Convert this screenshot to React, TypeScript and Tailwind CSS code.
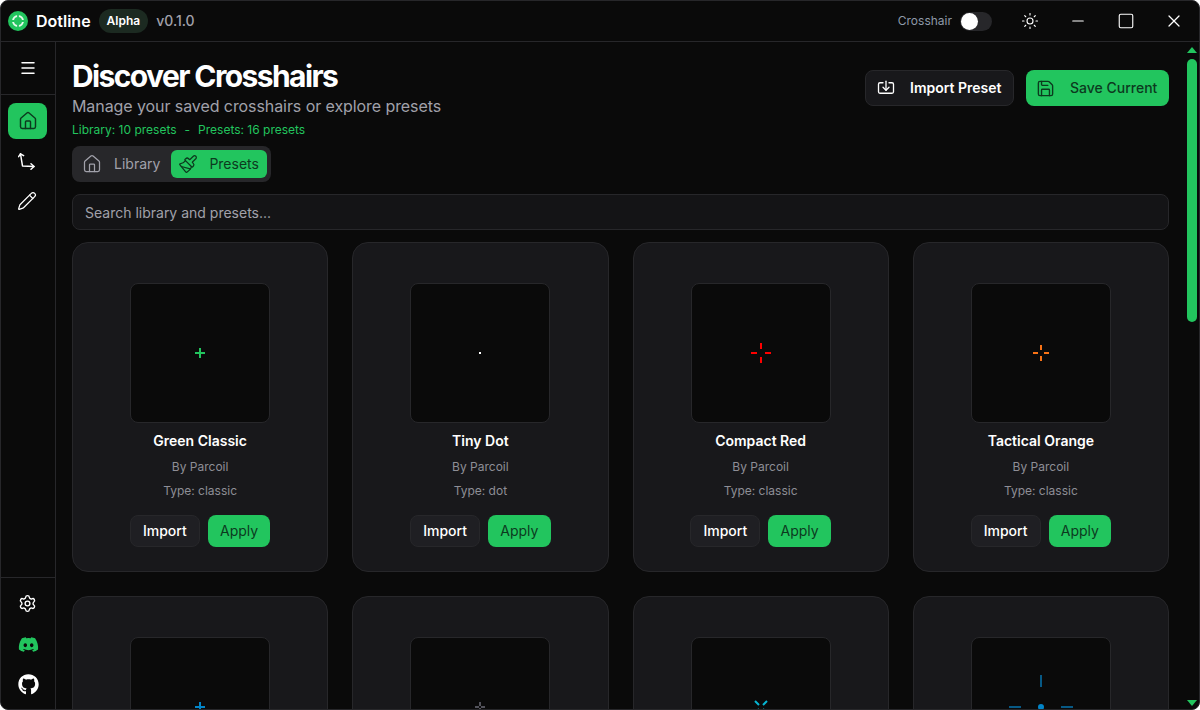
import { House, Import, Menu, Minus, Paintbrush, Pencil, Save, Settings, Square, Sun, X } from 'lucide-react'
import { FaDiscord, FaGithub } from 'react-icons/fa'

type Preset = { name: string; type: string; mark: React.ReactNode }

const Arms = ({ color, gap, len, w }: { color: string; gap: number; len: number; w: number }) => {
    const c = 16
    return (
        <svg width="32" height="32" viewBox="0 0 32 32" shapeRendering="crispEdges">
            <rect x={c - w / 2} y={c - gap - len} width={w} height={len} fill={color} />
            <rect x={c - w / 2} y={c + gap} width={w} height={len} fill={color} />
            <rect x={c - gap - len} y={c - w / 2} width={len} height={w} fill={color} />
            <rect x={c + gap} y={c - w / 2} width={len} height={w} fill={color} />
        </svg>
    )
}

const presets: Preset[] = [
    { name: 'Green Classic', type: 'classic', mark: <Arms color="#22c55e" gap={0} len={5} w={2} /> },
    { name: 'Tiny Dot', type: 'dot', mark: <div className="size-[2px] bg-white" /> },
    { name: 'Compact Red', type: 'classic', mark: <Arms color="#ff0000" gap={4} len={6} w={2} /> },
    { name: 'Tactical Orange', type: 'classic', mark: <Arms color="#f97316" gap={3} len={5} w={2} /> },
    { name: 'Blue Cross', type: 'classic', mark: <Arms color="#0284c7" gap={0} len={5} w={2} /> },
    { name: 'Gray Cross', type: 'classic', mark: <Arms color="#52525b" gap={1} len={4} w={2} /> },
    {
        name: 'Cyan X',
        type: 'classic',
        mark: (
            <svg width="32" height="32" viewBox="0 0 32 32" stroke="#06b6d4" strokeWidth="2">
                <path d="M10 10l4 4M22 10l-4 4M10 22l4-4M22 22l-4-4" />
            </svg>
        ),
    },
    {
        name: 'Blue Dot',
        type: 'classic',
        mark: (
            <div className="relative size-[96px] shrink-0">
                <div className="absolute left-[47px] top-[16px] h-3 w-0.5 bg-[#075985]" />
                <div className="absolute left-[16px] top-[47px] h-0.5 w-3 bg-[#075985]" />
                <div className="absolute right-[16px] top-[47px] h-0.5 w-3 bg-[#075985]" />
                <div className="absolute left-[45px] top-[45px] size-1.5 rounded-full bg-[#0284c7]" />
            </div>
        ),
    },
]

const Logo = () => (
    <svg width="20" height="20" viewBox="0 0 20 20" fill="none">
        <circle cx="10" cy="10" r="10" fill="#22c55e" />
        <circle cx="10" cy="10" r="5" stroke="#e8fbef" strokeWidth="2" />
        <path d="M10 3.5v3.2M10 13.3v3.2M3.5 10h3.2M13.3 10h3.2" stroke="#22c55e" strokeWidth="1.8" />
    </svg>
)

const AxisIcon = () => (
    <svg width="17" height="17" viewBox="0 0 17 17" fill="none" stroke="#fff" strokeWidth="1.5" strokeLinecap="round" strokeLinejoin="round">
        <path d="M2.5 0.8l2 12.2 11.5 .5" />
        <path d="M0.6 3.6L2.5 0.8l3.1 1.8" />
        <path d="M13 10.8l3 2.7-3 2.7" />
    </svg>
)

const TitleBar = () => (
    <header className="flex h-[41px] shrink-0 items-center border-b border-[#27272a] pl-[7px]">
        <Logo />
        <span className="ml-2 text-base font-semibold text-white">Dotline</span>
        <span className="ml-2 flex h-6 items-center rounded-full bg-[#1c2a21] px-2 text-xs font-semibold text-white">
            Alpha
        </span>
        <span className="ml-2 text-sm font-medium text-[#a1a1aa]">v0.1.0</span>
        <div className="ml-auto flex items-center">
            <span className="text-xs text-[#8e99a8]">Crosshair</span>
            <div className="ml-2 flex h-[19px] w-8 items-center rounded-full bg-[#27272a] pl-px">
                <div className="size-[17px] rounded-full bg-white" />
            </div>
            <Sun size={18} className="ml-[29px] text-white" strokeWidth={1.5} />
            <Minus size={18} className="ml-[30px] text-white" strokeWidth={1.5} />
            <Square size={18} className="ml-[30px] text-white" strokeWidth={1.5} />
            <X size={20} className="ml-[29px] mr-[15px] text-white" strokeWidth={1.5} />
        </div>
    </header>
)

const Sidebar = () => (
    <aside className="flex w-[55px] shrink-0 flex-col border-r border-[#27272a]">
        <div className="flex h-[53px] items-center justify-center border-b border-[#27272a]">
            <Menu size={18} className="text-white" />
        </div>
        <nav className="flex flex-col items-start gap-1 pl-[7px] pt-[8px]">
            <div className="flex h-9 w-[39px] items-center justify-center rounded-lg bg-[#22c55e]">
                <House size={20} className="text-[#0c3a1e]" strokeWidth={1.75} />
            </div>
            <div className="flex h-9 w-[39px] items-center justify-center pr-[3px]">
                <AxisIcon />
            </div>
            <div className="flex h-9 w-[39px] items-center justify-center pr-px">
                <Pencil size={20} className="text-white" strokeWidth={1.5} />
            </div>
        </nav>
        <div className="mt-auto flex flex-col items-center gap-[19px] border-t border-[#27272a] pb-[14px] pt-[16px]">
            <Settings size={19} className="mb-[2px] mr-[2px] text-white" strokeWidth={1.75} />
            <FaDiscord size={21} className="text-[#22c55e]" />
            <FaGithub size={21} className="text-white" />
        </div>
    </aside>
)

const Card = ({ preset }: { preset: Preset }) => (
    <div className="flex flex-col items-center rounded-2xl border border-[#27272a] bg-[#18181b] pb-6 pt-10">
        <div className="flex size-[140px] items-center justify-center overflow-hidden rounded-lg border border-[#27272a] bg-[#0a0a0a]">
            {preset.mark}
        </div>
        <h3 className="mt-2 text-sm font-semibold leading-5 text-white">{preset.name}</h3>
        <p className="mt-[7px] text-xs leading-[18px] text-[#8e8e96]">By Parcoil</p>
        <p className="mt-[6px] text-xs leading-[18px] text-[#8e8e96]">Type: {preset.type}</p>
        <div className="mt-[15px] flex gap-2">
            <button className="h-8 w-[70px] rounded-lg border border-[#27272a] bg-[#1f1f23] text-sm font-medium text-white">
                Import
            </button>
            <button className="h-8 w-[62.6px] rounded-lg bg-[#22c55e] text-sm text-[#0c3a1e]">Apply</button>
        </div>
    </div>
)

const Scrollbar = () => (
    <div className="flex w-[30px] shrink-0 flex-col items-center pl-[18px] pr-[2px] pt-[5px]">
        <div className="h-0 w-0 border-x-[5px] border-b-[6px] border-x-transparent border-b-[#22c55e]" />
        <div className="mt-[6px] h-[263px] w-2.5 shrink-0 rounded-full bg-[#22c55e]" />
        <div className="mt-auto mb-[3px] h-0 w-0 border-x-[5px] border-t-[6px] border-x-transparent border-t-[#22c55e]" />
    </div>
)

export default function App() {
    return (
        <div
            className="flex h-[710px] w-[1200px] flex-col overflow-hidden rounded-lg border border-[#27272a] bg-[#0a0a0a]"
            style={{ fontFamily: 'Inter, sans-serif' }}
        >
            <TitleBar />
            <div className="flex min-h-0 flex-1">
                <Sidebar />
                <main className="min-w-0 flex-1 overflow-hidden pl-4 pt-[17px]">
                    <div className="flex items-start justify-between">
                        <div>
                            <h1 className="text-3xl leading-[35px] font-bold tracking-[-1.6px] text-white">Discover Crosshairs</h1>
                            <p className="text-base leading-6 tracking-[-0.08px] text-[#a1a1aa]">
                                Manage your saved crosshairs or explore presets
                            </p>
                            <p className="mt-1 flex gap-2 text-xs leading-4 text-[#22c55e]">
                                <span>Library: 10 presets</span>
                                <span>-</span>
                                <span>Presets: 16 presets</span>
                            </p>
                        </div>
                        <div className="mt-[11px] flex gap-3">
                            <button className="flex h-9 w-[149px] items-center rounded-lg border border-[#27272a] bg-[#18181b] pl-[11px] text-sm font-semibold text-white">
                                <Import size={18} strokeWidth={1.75} />
                                <span className="ml-[15px]">Import Preset</span>
                            </button>
                            <button className="flex h-9 w-[143px] items-center rounded-lg bg-[#22c55e] pl-[10px] text-sm font-medium text-[#0c3a1e]">
                                <Save size={19} strokeWidth={1.75} />
                                <span className="ml-[15px]">Save Current</span>
                            </button>
                        </div>
                    </div>
                    <div className="mt-2 inline-flex h-9 items-center rounded-lg bg-[#27272a] p-1 align-top text-sm">
                        <div className="flex h-7 items-center pl-[6px] pr-[11px] text-[#a1a1aa]">
                            <House size={20} strokeWidth={1.5} />
                            <span className="ml-3">Library</span>
                        </div>
                        <div className="flex h-7 items-center rounded-md bg-[#22c55e] pl-[7px] pr-2 text-[#0c3a1e]">
                            <Paintbrush size={20} strokeWidth={1.5} />
                            <span className="ml-[11px]">Presets</span>
                        </div>
                    </div>
                    <div className="mt-3 flex h-9 items-center rounded-lg border border-[#27272a] bg-[#141416] px-3 pt-0.5 text-sm text-[#a1a1aa]">
                        Search library and presets...
                    </div>
                    <div className="mt-3 grid grid-cols-4 gap-6">
                        {presets.map((preset) => (
                            <Card key={preset.name} preset={preset} />
                        ))}
                    </div>
                </main>
                <Scrollbar />
            </div>
        </div>
    )
}
